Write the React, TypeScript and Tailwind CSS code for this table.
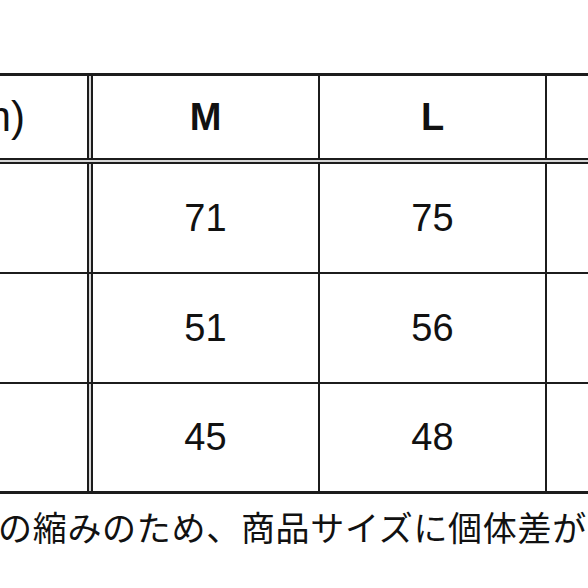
import React from "react";

const rows = [
  ["71", "75"],
  ["51", "56"],
  ["45", "48"],
];

function VLine() {
  return <div className="w-[2px] shrink-0 self-stretch bg-[#1c1c1c]" />;
}

function DoubleV() {
  return (
    <div className="flex w-[6px] shrink-0 self-stretch">
      <div className="w-[2px] bg-[#1c1c1c]" />
      <div className="w-[2px] bg-[#d6d6d6]" />
      <div className="w-[2px] bg-[#1c1c1c]" />
    </div>
  );
}

function Cell({ children, className = "" }: { children?: React.ReactNode; className?: string }) {
  return (
    <div className={`flex shrink-0 items-center justify-center ${className}`}>{children}</div>
  );
}

export default function App() {
  return (
    <div
      className="relative h-[588px] w-[588px] overflow-hidden bg-white text-[#111]"
      style={{ fontFamily: '"Liberation Sans", "Noto Sans CJK JP", sans-serif' }}
    >
      <div className="flex w-[772px] flex-col pt-[73px]">
        <div className="h-[3px] bg-[#1c1c1c]" />
        {/* header */}
        <div className="flex h-[82px]">
          <Cell className="w-[87px] justify-end overflow-hidden pr-[62px] text-[42px] leading-none whitespace-nowrap">
            (cm)
          </Cell>
          <DoubleV />
          <Cell className="w-[225px] text-[38px] font-bold">M</Cell>
          <VLine />
          <Cell className="w-[225px] text-[38px] font-bold">L</Cell>
          <VLine />
          <Cell className="w-[225px]" />
        </div>
        <div className="h-[2px] bg-[#1c1c1c]" />
        <div className="h-[2px] bg-[#d6d6d6]" />
        <div className="h-[2px] bg-[#1c1c1c]" />
        {rows.map((r, i) => (
          <React.Fragment key={i}>
            {i > 0 && <div className="h-[2px] bg-[#1c1c1c]" />}
            <div className={`flex ${i === 2 ? "h-[107px]" : "h-[108px]"}`}>
              <Cell className="w-[87px]" />
              <DoubleV />
              <Cell className="w-[225px] text-[38px]">{r[0]}</Cell>
              <VLine />
              <Cell className="w-[225px] text-[38px]">{r[1]}</Cell>
              <VLine />
              <Cell className="w-[225px]" />
            </div>
          </React.Fragment>
        ))}
        <div className="h-[3px] bg-[#1c1c1c]" />
        <div
          className="ml-[-2px] mt-[16px] whitespace-nowrap text-[34px] leading-[34px] tracking-[0.7px]"
          style={{ fontFamily: '"Noto Sans CJK JP", sans-serif' }}
        >
          の縮みのため、商品サイズに個体差が
        </div>
      </div>
    </div>
  );
}
